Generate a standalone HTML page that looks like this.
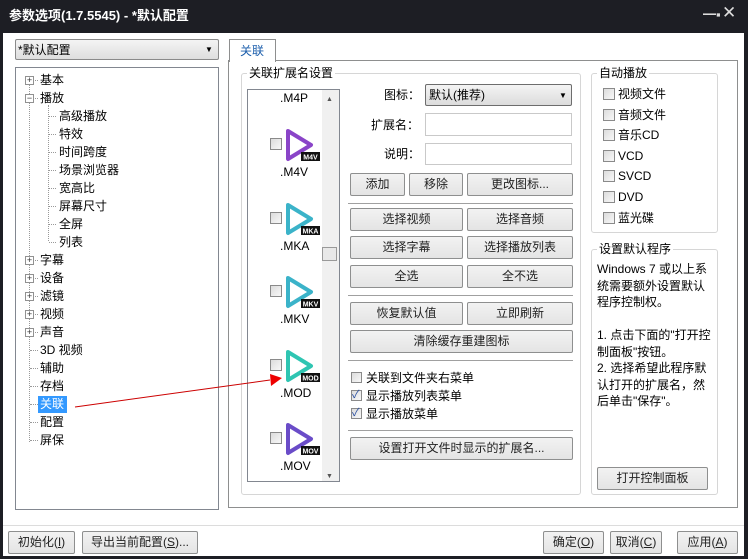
<!DOCTYPE html>
<html><head><meta charset="utf-8"><style>
*{box-sizing:border-box;margin:0;padding:0}
body{width:748px;height:559px;background:#1d1e24;position:relative;overflow:hidden;font-family:"Liberation Sans","Noto Sans CJK SC",sans-serif;font-size:12px;color:#000}
.a{position:absolute}
.t{position:absolute;white-space:nowrap;line-height:14px}
.btn{position:absolute;border:1px solid #8e8f8f;border-radius:2px;background:linear-gradient(#f2f2f2,#e4e4e4);text-align:center;line-height:21px;color:#222;white-space:nowrap}
.cb{position:absolute;width:11px;height:11px;border:1px solid #8a8a8a;background:linear-gradient(135deg,#dcdcdc,#f8f8f8)}
.grp{position:absolute;border:1px solid #d6d6d6;border-radius:3px}
.gl{position:absolute;background:#fff;padding:0 2px;line-height:14px;white-space:nowrap}
.inp{position:absolute;border:1px solid #c9c9c9;background:#fff}
.sep{position:absolute;height:1px;background:#a0a0a0}
.pl{position:absolute;width:9px;height:9px;border:1px solid #919191;background:#fff;font-size:9px;line-height:7px;text-align:center;color:#333}
.dot{position:absolute;border-top:1px dotted #999}
.dv{position:absolute;border-left:1px dotted #999}
</style></head><body>
<div class="t" style="left:9px;top:9px;color:#fff;font-size:13px;font-weight:bold">参数选项(1.7.5545) - *默认配置</div>
<div class="t" style="left:703px;top:8px;color:#ddd;font-size:13px">━▪</div>
<div class="t" style="left:722px;top:6px;color:#ddd;font-size:17px">✕</div>
<div class="a" style="left:3px;top:33px;width:741px;height:523px;background:#fff"></div>
<div class="a" style="left:3px;top:525px;width:741px;height:1px;background:#dcdcdc"></div>

<div class="a" style="left:15px;top:39px;width:204px;height:21px;border:1px solid #8a8a8a;border-radius:2px;background:linear-gradient(#f4f4f4,#dedede)"></div>
<div class="t" style="left:18px;top:43px">*默认配置</div>
<div class="t" style="left:205px;top:43px;font-size:8px">▼</div>

<div class="a" style="left:15px;top:67px;width:204px;height:443px;border:1px solid #828790"></div>
<div class="dv" style="left:29px;top:80px;height:362px"></div>
<div class="dv" style="left:48px;top:105px;height:136px"></div>
<div id="tree"></div>

<div class="a" style="left:228px;top:60px;width:510px;height:448px;border:1px solid #8e8f8f"></div>
<div class="a" style="left:229px;top:39px;width:47px;height:23px;border:1px solid #8e8f8f;border-bottom:none;background:#fff"></div>
<div class="t" style="left:240px;top:44px;color:#1a5dab">关联</div>

<div class="grp" style="left:241px;top:73px;width:340px;height:422px"></div>
<div class="gl" style="left:247px;top:66px">关联扩展名设置</div>
<div class="a" style="left:247px;top:89px;width:93px;height:393px;border:1px solid #828790;background:#fff"></div>
<div class="a" style="left:322px;top:90px;width:17px;height:391px;background:#f0f0f0"></div>
<div class="t" style="left:326px;top:93px;font-size:7px;color:#555">▲</div>
<div class="t" style="left:326px;top:470px;font-size:7px;color:#555">▼</div>
<div class="a" style="left:322px;top:247px;width:15px;height:14px;border:1px solid #999;background:#e8e8e8"></div>
<div class="t" style="left:280px;top:91px;font-size:12px">.M4P</div>
<div id="list"></div>

<div class="t" style="left:384px;top:88px">图标：</div>
<div class="a" style="left:425px;top:84px;width:147px;height:22px;border:1px solid #6d6d6d;border-radius:2px;background:linear-gradient(#f4f4f4,#dcdcdc)"></div>
<div class="t" style="left:429px;top:88px">默认(推荐)</div>
<div class="t" style="left:559px;top:89px;font-size:8px">▼</div>
<div class="t" style="left:371px;top:118px">扩展名：</div>
<div class="inp" style="left:425px;top:113px;width:147px;height:23px"></div>
<div class="t" style="left:384px;top:147px">说明：</div>
<div class="inp" style="left:425px;top:143px;width:147px;height:22px"></div>

<div class="btn" style="left:350px;top:173px;width:55px;height:23px">添加</div>
<div class="btn" style="left:409px;top:173px;width:54px;height:23px">移除</div>
<div class="btn" style="left:467px;top:173px;width:106px;height:23px">更改图标...</div>
<div class="sep" style="left:348px;top:203px;width:225px"></div>
<div class="btn" style="left:350px;top:208px;width:113px;height:23px">选择视频</div>
<div class="btn" style="left:467px;top:208px;width:106px;height:23px">选择音频</div>
<div class="btn" style="left:350px;top:236px;width:113px;height:23px">选择字幕</div>
<div class="btn" style="left:467px;top:236px;width:106px;height:23px">选择播放列表</div>
<div class="btn" style="left:350px;top:265px;width:113px;height:23px">全选</div>
<div class="btn" style="left:467px;top:265px;width:106px;height:23px">全不选</div>
<div class="sep" style="left:348px;top:295px;width:225px"></div>
<div class="btn" style="left:350px;top:302px;width:113px;height:23px">恢复默认值</div>
<div class="btn" style="left:467px;top:302px;width:106px;height:23px">立即刷新</div>
<div class="btn" style="left:350px;top:330px;width:223px;height:23px">清除缓存重建图标</div>
<div class="sep" style="left:348px;top:360px;width:225px"></div>
<div class="cb" style="left:351px;top:372px"></div><div class="t" style="left:366px;top:371px">关联到文件夹右菜单</div>
<div class="cb" style="left:351px;top:390px"></div><div class="t" style="left:352px;top:388px;color:#2a4fa0;font-size:11px">✓</div><div class="t" style="left:366px;top:389px">显示播放列表菜单</div>
<div class="cb" style="left:351px;top:408px"></div><div class="t" style="left:352px;top:406px;color:#2a4fa0;font-size:11px">✓</div><div class="t" style="left:366px;top:407px">显示播放菜单</div>
<div class="sep" style="left:348px;top:430px;width:225px"></div>
<div class="btn" style="left:350px;top:437px;width:223px;height:23px">设置打开文件时显示的扩展名...</div>

<div class="grp" style="left:591px;top:73px;width:127px;height:160px"></div>
<div class="gl" style="left:597px;top:66px">自动播放</div>
<div id="ap"></div>

<div class="grp" style="left:591px;top:249px;width:127px;height:246px"></div>
<div class="gl" style="left:597px;top:242px">设置默认程序</div>
<div class="a" style="left:597px;top:261px;width:118px;line-height:16.5px;white-space:nowrap">Windows 7 或以上系<br>统需要额外设置默认<br>程序控制权。<br><br>1. 点击下面的"打开控<br>制面板"按钮。<br>2. 选择希望此程序默<br>认打开的扩展名，然<br>后单击"保存"。</div>
<div class="btn" style="left:597px;top:467px;width:111px;height:23px">打开控制面板</div>

<div class="btn" style="left:8px;top:531px;width:67px;height:23px">初始化(<u>I</u>)</div>
<div class="btn" style="left:82px;top:531px;width:116px;height:23px">导出当前配置(<u>S</u>)...</div>
<div class="btn" style="left:543px;top:531px;width:61px;height:23px">确定(<u>O</u>)</div>
<div class="btn" style="left:610px;top:531px;width:52px;height:23px">取消(<u>C</u>)</div>
<div class="btn" style="left:677px;top:531px;width:61px;height:23px">应用(<u>A</u>)</div>

<svg class="a" style="left:0;top:0" width="748" height="559">
<line x1="75" y1="407" x2="270" y2="380" stroke="#c00" stroke-width="1"/>
<polygon points="270,374 282,378 271,386" fill="#e00"/>
</svg>

<script>
var tr=document.getElementById('tree'),h='';
var items=[['基本',0,1],['播放',0,2],['高级播放',1],['特效',1],['时间跨度',1],['场景浏览器',1],['宽高比',1],['屏幕尺寸',1],['全屏',1],['列表',1],['字幕',0,1],['设备',0,1],['滤镜',0,1],['视频',0,1],['声音',0,1],['3D 视频',0],['辅助',0],['存档',0],['关联',0],['配置',0],['屏保',0]];
items.forEach(function(it,i){var y=71+i*18;
 if(it[1]){h+='<div class="dot" style="left:49px;top:'+(y+9)+'px;width:7px"></div><div class="t" style="left:59px;top:'+(y+2)+'px">'+it[0]+'</div>';}
 else{h+='<div class="dot" style="left:30px;top:'+(y+9)+'px;width:8px"></div>';
  if(it[2])h+='<div class="pl" style="left:25px;top:'+(y+5)+'px">'+(it[2]==1?'+':'−')+'</div>';
  if(it[0]=='关联')h+='<div class="a" style="left:38px;top:'+(y+1)+'px;width:29px;height:17px;background:#3399ff"></div><div class="t" style="left:40px;top:'+(y+2)+'px;color:#fff">'+it[0]+'</div>';
  else h+='<div class="t" style="left:40px;top:'+(y+2)+'px">'+it[0]+'</div>';}
});
tr.innerHTML=h;
var L=document.getElementById('list');h='';
[['M4V','#8a44c8'],['MKA','#3bb3c9'],['MKV','#3bb3c9'],['MOD','#2fc5b2'],['MOV','#6a4cc8']].forEach(function(e,i){var y=127+i*73.5;
 h+='<div class="cb" style="left:270px;top:'+(y+11)+'px;width:12px;height:12px"></div>';
 h+='<svg class="a" style="left:284px;top:'+y+'px" width="40" height="36"><path d="M4 4 L27 18 L4 32 Z" fill="none" stroke="'+e[1]+'" stroke-width="4" stroke-linejoin="round"/><rect x="17" y="25" width="19" height="9" fill="#111"/><text x="26.5" y="32.5" font-size="7" font-weight="bold" fill="#fff" text-anchor="middle" font-family="Liberation Sans">'+e[0]+'</text></svg>';
 h+='<div class="t" style="left:280px;top:'+(y+38)+'px">.'+e[0]+'</div>';});
L.innerHTML=h;
var A=document.getElementById('ap');h='';
['视频文件','音频文件','音乐CD','VCD','SVCD','DVD','蓝光碟'].forEach(function(s,i){var y=88+i*20.6;
 h+='<div class="cb" style="left:603px;top:'+y+'px;width:12px;height:12px"></div><div class="t" style="left:618px;top:'+(y-1)+'px">'+s+'</div>';});
A.innerHTML=h;
</script>
</body></html>
